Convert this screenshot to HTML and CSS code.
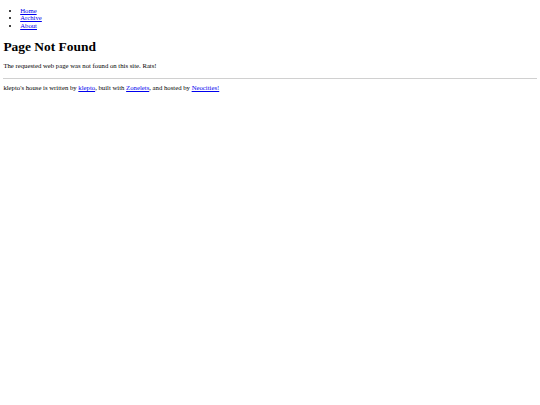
FILE: index.html
```html
<!doctype html>
<html lang="en">
<head>
  <meta charset="utf-8">
  <title>Page Not Found - klepto's house</title>
  <link rel="stylesheet" href="styles.css">
</head>
<body>
  <nav>
    <ul class="nav-list">
      <li><a href="#">Home</a></li>
      <li><a href="#">Archive</a></li>
      <li><a href="#">About</a></li>
    </ul>
  </nav>

  <main>
    <h1>Page Not Found</h1>
    <p>The requested web page was not found on this site. Rats!</p>
  </main>

  <hr class="divider">

  <footer>
    <p class="credits">klepto's house is written by <a href="#">klepto</a>, built with <a href="#">Zonelets</a>, and hosted by <a href="#">Neocities!</a></p>
  </footer>
</body>
</html>
```

FILE: styles.css
```css
body {
  margin: 3.4px;
  font-family: "Liberation Serif", serif;
  font-size: 6.72px;
  line-height: 7.6px;
  color: #000;
  background: #fff;
}

a {
  color: #0000ee;
  text-decoration-thickness: 1px;
  text-underline-offset: 1px;
}

.nav-list {
  margin: 3.2px 0 6.7px;
  padding-left: 16.8px;
}

h1 {
  font-size: 13.44px;
  line-height: 15.5px;
  margin: 10px 0 7px;
}

p {
  margin: 6.7px 0;
}

.divider {
  margin: 8.7px 0 4px;
  border: none;
  border-top: 1px solid #d0d0d0;
}

.credits {
  margin: 0;
  line-height: 9px;
}
```
